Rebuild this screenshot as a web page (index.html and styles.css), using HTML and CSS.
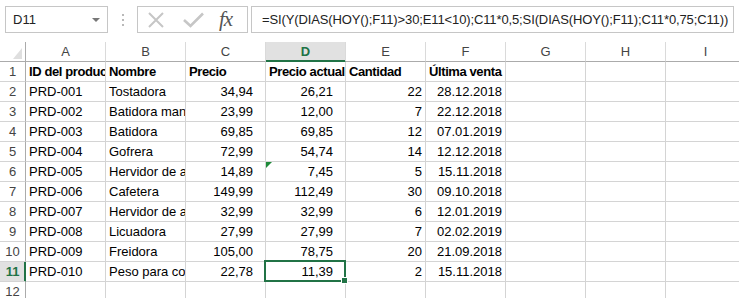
FILE: index.html
```html
<!DOCTYPE html>
<html lang="es">

<head>
    <meta charset="UTF-8">
    <meta name="viewport" content="width=device-width, initial-scale=1.0">
    <title>Productos</title>
    <link rel="stylesheet" href="styles.css">
</head>

<body>
    <div class="formula-bar">
        <div class="name-box">
            <span>D11</span>
            <span class="caret"></span>
        </div>
        <div class="grip"><span></span><span></span><span></span></div>
        <div class="fx-buttons">
            <svg class="icon-x" width="16" height="16" viewBox="0 0 16 16">
                <path d="M1 1 L15 15 M15 1 L1 15" stroke="#c6c6c6" stroke-width="2" fill="none" />
            </svg>
            <svg class="icon-check" width="21" height="16" viewBox="0 0 21 16">
                <path d="M1 8 L7.5 14 L20 1.5" stroke="#c6c6c6" stroke-width="2.6" fill="none" />
            </svg>
            <span class="fx">fx</span>
        </div>
        <div class="formula">=SI(Y(DIAS(HOY();F11)&gt;30;E11&lt;10);C11*0,5;SI(DIAS(HOY();F11);C11*0,75;C11))</div>
    </div>

    <table class="sheet">
        <thead>
            <tr>
                <th class="corner"><span class="select-all"></span></th>
                <th>A</th>
                <th>B</th>
                <th>C</th>
                <th class="active">D</th>
                <th>E</th>
                <th>F</th>
                <th>G</th>
                <th>H</th>
                <th>I</th>
            </tr>
        </thead>
        <tbody>
            <tr class="head-row">
                <th>1</th>
                <td>ID del producto</td>
                <td>Nombre</td>
                <td>Precio</td>
                <td>Precio actual</td>
                <td>Cantidad</td>
                <td>Última venta</td>
                <td></td><td></td><td></td>
            </tr>
            <tr>
                <th>2</th>
                <td>PRD-001</td>
                <td>Tostadora</td>
                <td class="num">34,94</td>
                <td class="num">26,21</td>
                <td class="int">22</td>
                <td class="int">28.12.2018</td>
                <td></td><td></td><td></td>
            </tr>
            <tr>
                <th>3</th>
                <td>PRD-002</td>
                <td>Batidora manual</td>
                <td class="num">23,99</td>
                <td class="num">12,00</td>
                <td class="int">7</td>
                <td class="int">22.12.2018</td>
                <td></td><td></td><td></td>
            </tr>
            <tr>
                <th>4</th>
                <td>PRD-003</td>
                <td>Batidora</td>
                <td class="num">69,85</td>
                <td class="num">69,85</td>
                <td class="int">12</td>
                <td class="int">07.01.2019</td>
                <td></td><td></td><td></td>
            </tr>
            <tr>
                <th>5</th>
                <td>PRD-004</td>
                <td>Gofrera</td>
                <td class="num">72,99</td>
                <td class="num">54,74</td>
                <td class="int">14</td>
                <td class="int">12.12.2018</td>
                <td></td><td></td><td></td>
            </tr>
            <tr>
                <th>6</th>
                <td>PRD-005</td>
                <td>Hervidor de agua</td>
                <td class="num">14,89</td>
                <td class="num flag">7,45</td>
                <td class="int">5</td>
                <td class="int">15.11.2018</td>
                <td></td><td></td><td></td>
            </tr>
            <tr>
                <th>7</th>
                <td>PRD-006</td>
                <td>Cafetera</td>
                <td class="num">149,99</td>
                <td class="num">112,49</td>
                <td class="int">30</td>
                <td class="int">09.10.2018</td>
                <td></td><td></td><td></td>
            </tr>
            <tr>
                <th>8</th>
                <td>PRD-007</td>
                <td>Hervidor de agua</td>
                <td class="num">32,99</td>
                <td class="num">32,99</td>
                <td class="int">6</td>
                <td class="int">12.01.2019</td>
                <td></td><td></td><td></td>
            </tr>
            <tr>
                <th>9</th>
                <td>PRD-008</td>
                <td>Licuadora</td>
                <td class="num">27,99</td>
                <td class="num">27,99</td>
                <td class="int">7</td>
                <td class="int">02.02.2019</td>
                <td></td><td></td><td></td>
            </tr>
            <tr>
                <th>10</th>
                <td>PRD-009</td>
                <td>Freidora</td>
                <td class="num">105,00</td>
                <td class="num">78,75</td>
                <td class="int">20</td>
                <td class="int">21.09.2018</td>
                <td></td><td></td><td></td>
            </tr>
            <tr>
                <th class="active">11</th>
                <td>PRD-010</td>
                <td>Peso para cocina</td>
                <td class="num">22,78</td>
                <td class="num selected">11,39<span class="selection"><span class="handle"></span></span></td>
                <td class="int">2</td>
                <td class="int">15.11.2018</td>
                <td></td><td></td><td></td>
            </tr>
            <tr>
                <th>12</th>
                <td></td><td></td><td></td><td></td><td></td><td></td><td></td><td></td><td></td>
            </tr>
        </tbody>
    </table>
</body>

</html>
```

FILE: styles.css
```css
body {
    margin: 0;
    width: 739px;
    height: 298px;
    overflow: hidden;
    background: #fff;
    font-family: "Liberation Sans", Arial, sans-serif;
    color: #000;
}

/* formula bar */

.formula-bar {
    display: flex;
    height: 27px;
    padding: 6px 0 0 5px;
}

.name-box {
    width: 103px;
    box-sizing: border-box;
    border: 1px solid #c6c6c6;
    display: flex;
    align-items: center;
    justify-content: space-between;
    padding: 0 7px 0 7px;
    font-size: 13px;
    color: #222;
}

.caret {
    border-left: 4px solid transparent;
    border-right: 4px solid transparent;
    border-top: 4px solid #777;
}

.grip {
    width: 29px;
    display: flex;
    flex-direction: column;
    align-items: center;
    justify-content: center;
    gap: 3px;
}

.grip span {
    width: 2px;
    height: 2px;
    background: #b9b9b9;
}

.fx-buttons {
    width: 111px;
    box-sizing: border-box;
    border: 1px solid #c6c6c6;
    display: flex;
    align-items: center;
    padding-left: 10px;
}

.icon-check {
    margin-left: 19px;
}

.fx {
    margin-left: 15px;
    font-family: "Liberation Serif", "Times New Roman", serif;
    font-style: italic;
    font-size: 21px;
    color: #555;
    letter-spacing: -1px;
}

.formula {
    margin-left: 3px;
    width: 483px;
    box-sizing: border-box;
    border: 1px solid #c6c6c6;
    padding-left: 10px;
    display: flex;
    align-items: center;
    font-size: 13px;
    letter-spacing: -0.12px;
    color: #222;
    white-space: nowrap;
    overflow: hidden;
}

/* grid */

.sheet {
    margin-top: 9px;
    border-collapse: separate;
    border-spacing: 0;
    table-layout: fixed;
    width: 746px;
    font-size: 13px;
}

.sheet th,
.sheet td {
    box-sizing: border-box;
    height: 20px;
    padding: 1px 3px 0 3px;
    line-height: 18px;
    border-right: 1px solid #d4d4d4;
    border-bottom: 1px solid #d4d4d4;
    white-space: nowrap;
    overflow: hidden;
    text-align: left;
}

.sheet thead th {
    width: 80px;
    text-align: center;
    font-weight: normal;
    color: #444;
    border-right-color: #dadada;
    border-bottom-color: #ababab;
}

.sheet thead th.corner {
    width: 26px;
    border-right-color: #ababab;
    padding: 0;
}

.select-all {
    display: block;
    width: 0;
    height: 0;
    margin: 3px 3px 0 auto;
    border-left: 9px solid transparent;
    border-bottom: 11px solid #dfdfdf;
}

.sheet tbody th {
    padding: 1px 0 0 0;
    text-align: center;
    font-weight: normal;
    color: #444;
    border-right-color: #ababab;
}

.sheet th.active {
    background: #e1e1e1;
    color: #217346;
    font-weight: bold;
}

.sheet thead th.active {
    border-bottom-color: #217346;
    box-shadow: inset 0 -1px 0 #217346;
}

.sheet tbody th.active {
    border-right-color: #217346;
    box-shadow: inset -1px 0 0 #217346;
}

.head-row td {
    font-weight: bold;
    letter-spacing: -0.4px;
    text-overflow: clip;
}

.num {
    text-align: right !important;
    padding-right: 12px !important;
}

.int {
    text-align: right !important;
}

.flag,
.selected {
    position: relative;
    overflow: visible !important;
}

.flag::before {
    content: "";
    position: absolute;
    top: 0;
    left: 0;
    border-top: 6px solid #1e8a3a;
    border-right: 6px solid transparent;
}

.selection {
    position: absolute;
    top: -2px;
    left: -2px;
    right: -1px;
    bottom: -1px;
    border: 2px solid #217346;
}

.handle {
    position: absolute;
    right: -4px;
    bottom: -4px;
    width: 5px;
    height: 5px;
    background: #217346;
    border: 1px solid #fff;
}
```
